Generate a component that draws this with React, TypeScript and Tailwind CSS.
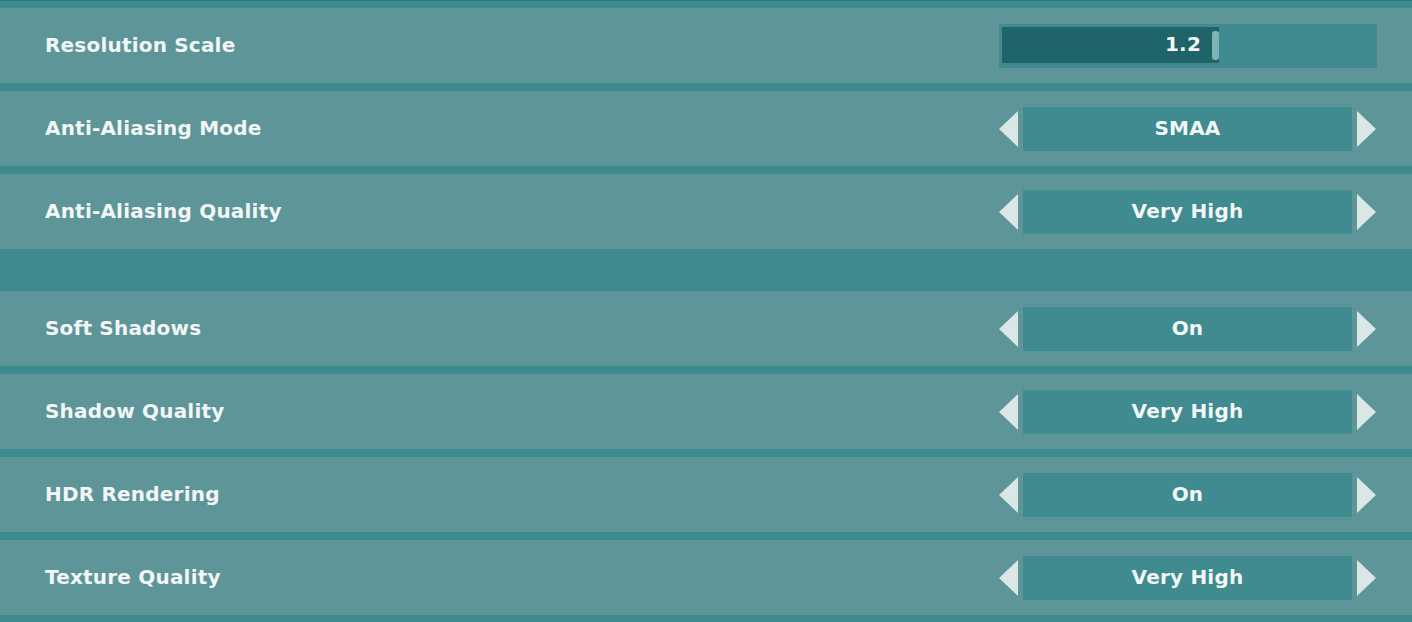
import React, { useState } from 'react';

type Setting =
  | { kind: 'slider'; label: string; value: number; min: number; max: number }
  | { kind: 'choice'; label: string; options: string[]; index: number }
  | { kind: 'spacer' };

const initialSettings: Setting[] = [
  { kind: 'slider', label: 'Resolution Scale', value: 1.2, min: 0.5, max: 2 },
  { kind: 'choice', label: 'Anti-Aliasing Mode', options: ['Off', 'FXAA', 'SMAA', 'TAA'], index: 2 },
  { kind: 'choice', label: 'Anti-Aliasing Quality', options: ['Low', 'Medium', 'High', 'Very High'], index: 3 },
  { kind: 'spacer' },
  { kind: 'choice', label: 'Soft Shadows', options: ['Off', 'On'], index: 1 },
  { kind: 'choice', label: 'Shadow Quality', options: ['Low', 'Medium', 'High', 'Very High'], index: 3 },
  { kind: 'choice', label: 'HDR Rendering', options: ['Off', 'On'], index: 1 },
  { kind: 'choice', label: 'Texture Quality', options: ['Low', 'Medium', 'High', 'Very High'], index: 3 },
];

const font = { fontFamily: '"DejaVu Sans", "Noto Sans", sans-serif' };

// shared text look for labels and values
const textCls = 'text-[#f2f6f6] text-[20px] font-bold tracking-[0.2px] leading-none -mt-[2px]';

const Arrow: React.FC<{ dir: 'left' | 'right'; onClick: () => void }> = ({ dir, onClick }) => (
  <button onClick={onClick} className="w-[22px] h-[38px] flex items-center justify-center">
    <svg width="22" height="38" viewBox="0 0 22 38">
      {dir === 'left' ? (
        <polygon points="20,1 20,37 1,19" fill="#dbe6e6" />
      ) : (
        <polygon points="2,1 2,37 21,19" fill="#dbe6e6" />
      )}
    </svg>
  </button>
);

const Slider: React.FC<{ value: number; min: number; max: number }> = ({ value }) => (
  <div className="w-[378px] h-[44px] bg-[#3f8b8f] p-[3px] flex">
    <div className="relative h-[36px] w-[217px] bg-[#1e6468] flex items-center justify-end pr-[18px]">
      <span className={textCls}>{value.toFixed(1)}</span>
      <div className="absolute right-0 top-[4px] h-[29px] w-[7px] rounded-[3px] bg-[#82b3b4]" />
    </div>
  </div>
);

export default function App() {
  const [settings, setSettings] = useState<Setting[]>(initialSettings);

  const step = (i: number, d: number) =>
    setSettings((prev) =>
      prev.map((s, j) => {
        if (j !== i || s.kind !== 'choice') return s;
        const n = s.options.length;
        return { ...s, index: (s.index + d + n) % n };
      })
    );

  return (
    <div className="w-[1412px] h-[622px] overflow-hidden bg-[#3f8a8e] border-t border-[#2b797b]" style={font}>
      <div className="flex flex-col gap-2 pt-[7px]">
        {settings.map((s, i) =>
          s.kind === 'spacer' ? (
            <div key={i} className="h-[26px]" />
          ) : (
            <div key={i} className="h-[75px] bg-[#5e9598] flex items-center justify-between pl-[45px] pr-[35px]">
              <span className={textCls}>{s.label}</span>
              {s.kind === 'slider' ? (
                <Slider value={s.value} min={s.min} max={s.max} />
              ) : (
                <div className="flex items-center gap-[3px]">
                  <Arrow dir="left" onClick={() => step(i, -1)} />
                  <div className="w-[329px] h-[44px] bg-[#3f8b8f] flex items-center justify-center">
                    <span className={textCls}>{s.options[s.index]}</span>
                  </div>
                  <Arrow dir="right" onClick={() => step(i, 1)} />
                </div>
              )}
            </div>
          )
        )}
      </div>
    </div>
  );
}
